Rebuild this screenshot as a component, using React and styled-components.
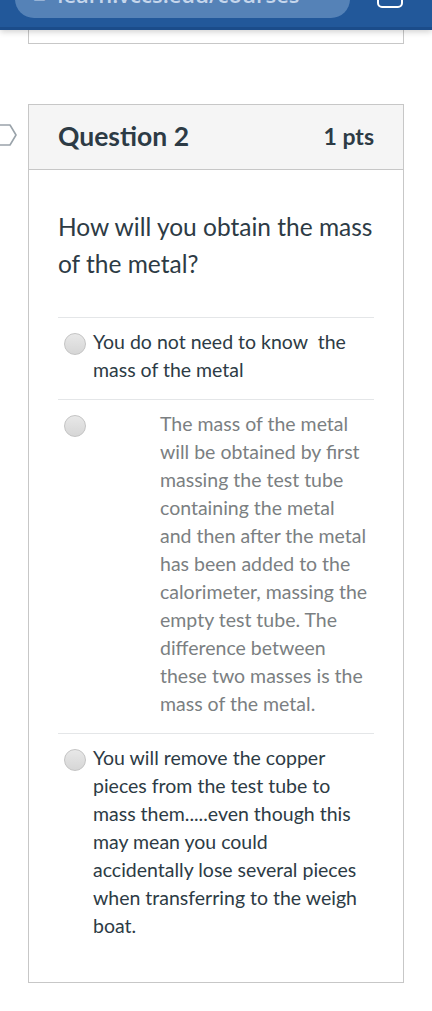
import styled, { createGlobalStyle } from "styled-components";

const GlobalStyle = createGlobalStyle`
  body {
    margin: 0;
    background: #ffffff;
    font-family: Lato, "Open Sans", sans-serif;
    color: #2d3b45;
  }
`;

const answers = [
  { id: 1, text: "You do not need to know\u00a0 the mass of the metal" },
  {
    id: 2,
    text: "The mass of the metal will be obtained by first massing the test tube containing the metal and then after the metal has been added to the calorimeter, massing the empty test tube. The difference between these two masses is the mass of the metal.",
    indent: true,
    muted: true,
  },
  {
    id: 3,
    text: "You will remove the copper pieces from the test tube to mass them.....even though this may mean you could accidentally lose several pieces when transferring to the weigh boat.",
  },
];

function App() {
  return (
    <>
      <GlobalStyle />
      <TopBar>
        <UrlPill>
          <UrlText>≡ &nbsp;learn.vccs.edu/courses</UrlText>
        </UrlPill>
        <TabIcon />
      </TopBar>
      <PrevCard />
      <QuestionRow>
        <Flag>
          <svg width="18" height="24" viewBox="0 0 18 24">
            <path
              d="M-2 2 H10 L16 12 L10 22 H-2"
              fill="none"
              stroke="#9aa3aa"
              strokeWidth="1.6"
              strokeLinejoin="round"
            />
          </svg>
        </Flag>
        <Card>
          <CardHeader>
            <Title>Question 2</Title>
            <Points>1 pts</Points>
          </CardHeader>
          <CardBody>
            <Prompt>How will you obtain the mass of the metal?</Prompt>
            <AnswerList>
              {answers.map((a) => (
                <Answer key={a.id} $indent={a.indent}>
                  <Radio />
                  <AnswerText $indent={a.indent} $muted={a.muted}>
                    {a.text}
                  </AnswerText>
                </Answer>
              ))}
            </AnswerList>
          </CardBody>
        </Card>
      </QuestionRow>
    </>
  );
}

const TopBar = styled.header`
  position: relative;
  height: 27px;
  background: #22589a;
  border-bottom: 3px solid #1b4c8a;
  box-shadow: 0 2px 6px rgba(0, 0, 0, 0.18);
  z-index: 2;
  overflow: hidden;
`;

const UrlPill = styled.div`
  position: absolute;
  left: 15px;
  top: -20px;
  width: 335px;
  height: 38px;
  border-radius: 19px;
  background: #5582b7;
  overflow: hidden;
`;

const UrlText = styled.div`
  position: absolute;
  left: 18px;
  top: 2px;
  font-family: "Open Sans", sans-serif;
  font-size: 22px;
  line-height: 24px;
  font-weight: 600;
  color: #c5d6ec;
  white-space: nowrap;
`;

const TabIcon = styled.div`
  position: absolute;
  left: 377px;
  top: -14px;
  width: 22px;
  height: 18px;
  border: 2.5px solid #ffffff;
  border-radius: 5px;
`;

const PrevCard = styled.div`
  margin: 0 28px;
  height: 13px;
  border: 1px solid #c7c7c7;
  border-top: none;
`;

const QuestionRow = styled.div`
  display: flex;
  margin-top: 60px;
  padding-bottom: 29px;
`;

const Flag = styled.div`
  width: 28px;
  padding-top: 19px;
`;

const Card = styled.section`
  width: 374px;
  border: 1px solid #c7c7c7;
`;

const CardHeader = styled.div`
  box-sizing: border-box;
  display: flex;
  align-items: center;
  justify-content: space-between;
  height: 65px;
  padding: 0 29px 3px;
  background: #f5f5f5;
  border-bottom: 1px solid #c7c7c7;
`;

const Title = styled.h2`
  margin: 0;
  font-size: 26.5px;
  font-weight: 700;
  color: #2d3b45;
`;

const Points = styled.span`
  font-size: 23px;
  font-weight: 700;
  color: #2d3b45;
`;

const CardBody = styled.div`
  padding: 38px 29px 42px;
`;

const Prompt = styled.p`
  margin: 0 0 35px;
  font-size: 24.5px;
  line-height: 37px;
  color: #2d3b45;
`;

const AnswerList = styled.div`
  display: flex;
  flex-direction: column;
`;

const Answer = styled.div`
  display: flex;
  align-items: flex-start;
  gap: 7px;
  padding: 10px ${(p) => (p.$indent ? "4px" : "10px")} 15px 6px;
  border-top: 1px solid #e4e6e8;

  &:last-child {
    padding-bottom: 0;
  }
`;

const Radio = styled.span`
  flex: none;
  width: 20px;
  height: 20px;
  margin-top: 5px;
  border-radius: 50%;
  border: 1px solid #c4c4c4;
  background: linear-gradient(#e8e8e8, #d6d6d6);
`;

const AnswerText = styled.div`
  font-size: 19.5px;
  line-height: 28px;
  color: ${(p) => (p.$muted ? "#7b7f82" : "#2d3b45")};
  padding-left: ${(p) => (p.$indent ? "67px" : "0")};
`;

export default App;
